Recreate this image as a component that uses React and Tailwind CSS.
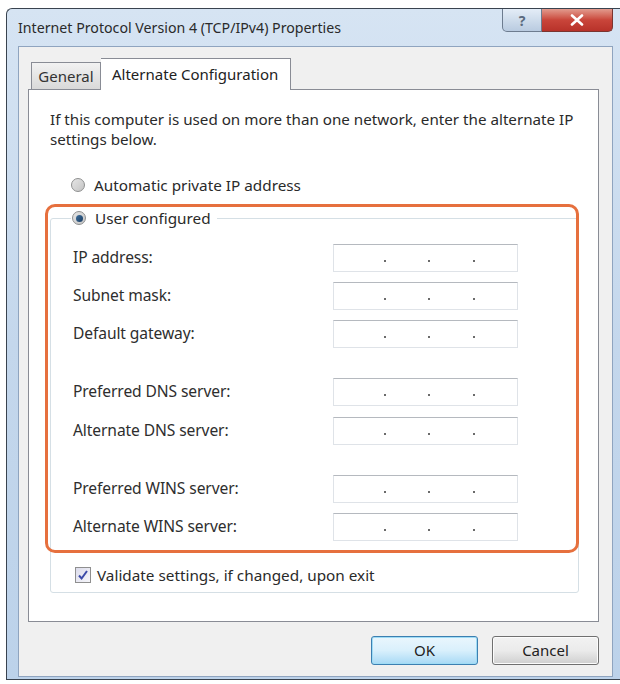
import { useState } from 'react'

const font = { fontFamily: '"Noto Sans", "Open Sans", Arial, sans-serif' }

const Radio = ({ checked }) => (
  <span className="relative flex h-[14px] w-[14px] items-center justify-center rounded-full border border-[#8e8f8f] bg-gradient-to-br from-[#e6e6e6] to-[#c4c4c4]">
    {checked && (
      <span className="h-[7px] w-[7px] rounded-full bg-gradient-to-br from-[#3f6f9c] to-[#1b3d63]" />
    )}
  </span>
)

const Checkbox = ({ checked }) => (
  <span className="flex h-[16px] w-[16px] items-center justify-center border border-[#8f8f8f] bg-gradient-to-br from-[#dcdcec] to-[#f6f6fa]">
    {checked && (
      <svg width="12" height="12" viewBox="0 0 12 12">
        <path d="M2 6.5 L4.6 9.5 L10 2" fill="none" stroke="#3b4aa8" strokeWidth="2" />
      </svg>
    )}
  </span>
)

const IpBox = () => (
  <div className="flex h-[28px] w-[185px] items-center border border-[#dfe3e8] border-t-[#b5b9bf] bg-white pl-[50px]">
    <span className="mt-[5px] h-[2px] w-[2px] bg-[#6b6b6b]" />
    <span className="ml-[42px] mt-[5px] h-[2px] w-[2px] bg-[#6b6b6b]" />
    <span className="ml-[43px] mt-[5px] h-[2px] w-[2px] bg-[#6b6b6b]" />
  </div>
)

const Field = ({ label, className = '' }) => (
  <div className={`flex items-center ${className}`}>
    <span className="w-[260px] text-[15.6px] tracking-[-0.1px] text-[#2e2e2e]">{label}</span>
    <IpBox />
  </div>
)

export default function App() {
  const [tab] = useState('alt')

  return (
    <div className="h-[684px] w-[620px] overflow-hidden bg-white pl-[6px] pt-[8px]" style={font}>
      {/* window frame */}
      <div className="flex h-[672px] flex-col rounded-tl-[6px] border-b border-l border-t border-[#39434f] bg-gradient-to-b from-[#d6e4f3] via-[#c4d7ec] to-[#bcd2ea]">
        {/* title bar */}
        <div className="flex h-[37px] shrink-0 items-start justify-between">
          <span className="whitespace-nowrap pl-[11px] pt-[8px] text-[14.2px] leading-[22px] text-[#2a2a2a]">
            Internet Protocol Version 4 (TCP/IPv4) Properties
          </span>
          <div className="mr-[7px] flex">
            <div className="flex h-[23px] w-[40px] items-center justify-center rounded-bl-[5px] border border-t-0 border-[#6d7c8f] bg-gradient-to-b from-[#e4edf7] to-[#b9cbe0] text-[14px] font-bold text-[#5a6a7e]">
              ?
            </div>
            <div className="flex h-[23px] w-[71px] items-center justify-center rounded-br-[5px] border border-l-0 border-t-0 border-[#7a3530] bg-gradient-to-b from-[#e19a8e] via-[#c9453a] to-[#b8322a]">
              <svg width="16" height="12" viewBox="0 0 16 12">
                <path d="M3 1.5 L13 10.5 M13 1.5 L3 10.5" stroke="#ffffff" strokeWidth="2.6" strokeLinecap="round" />
              </svg>
            </div>
          </div>
        </div>

        {/* client area */}
        <div className="mb-[2px] ml-[11px] mr-[7px] flex flex-1 flex-col border border-[#8fa4bf] bg-[#f0f0f0] pl-[9px] pr-[13px] pt-[10px]">
          {/* tabs */}
          <div className="flex h-[32px] items-end whitespace-nowrap text-[15px]">
            <div className="ml-[3px] flex h-[27px] w-[70px] items-center justify-center border border-b-0 border-[#898c95] bg-gradient-to-b from-[#f2f2f2] to-[#d9d9d9] text-[#333]">
              General
            </div>
            <div className={`relative top-[1px] flex h-[32px] w-[190px] items-center pl-[11px] border border-b-0 border-l-0 border-[#898c95] bg-white text-[#222] ${tab === 'alt' ? 'z-10' : ''}`}>
              Alternate Configuration
            </div>
          </div>

          {/* panel */}
          <div className="flex h-[533px] flex-col border border-[#898c95] bg-white px-[21px] pt-[19px] text-[15.3px] text-[#2a2a2a]">
            <p className="-mr-[8px] text-[15.2px] leading-[20px]">
              If this computer is used on more than one network, enter the alternate IP settings below.
            </p>

            <div className="mt-[26px] flex h-[20px] items-center gap-[9px] pl-[21px]">
              <Radio />
              <span>Automatic private IP address</span>
            </div>

            {/* group box */}
            <div className="relative mt-[23px] flex w-[529px] flex-col rounded-[3px] border border-[#d5dfe5] pb-[7px] pl-[22px] pt-[25px]">
              <div className="absolute left-[20px] top-[-11px] flex h-[20px] items-center gap-[9px] bg-white pl-[1px] pr-[6px]">
                <Radio checked />
                <span>User configured</span>
              </div>

              <Field label="IP address:" />
              <Field label="Subnet mask:" className="mt-[10px]" />
              <Field label="Default gateway:" className="mt-[10px]" />
              <Field label="Preferred DNS server:" className="mt-[30px]" />
              <Field label="Alternate DNS server:" className="mt-[11px]" />
              <Field label="Preferred WINS server:" className="mt-[30px]" />
              <Field label="Alternate WINS server:" className="mt-[10px]" />

              <div className="mt-[24px] flex h-[20px] items-center gap-[6px] pl-[2px]">
                <Checkbox checked />
                <span>Validate settings, if changed, upon exit</span>
              </div>

              {/* highlight annotation */}
              <div className="pointer-events-none absolute left-[-6px] top-[-15px] h-[349px] w-[534px] rounded-[10px] border-[3px] border-[#e6703e]" />
            </div>
          </div>

          {/* buttons */}
          <div className="mt-[14px] flex justify-end gap-[14px] text-[15px]">
            <button className="h-[29px] w-[107px] rounded-[3px] border border-[#3c7fb1] bg-gradient-to-b from-[#eaf6fd] via-[#d9f0fc] to-[#a7d9f5] text-[#222] shadow-[inset_0_0_0_1px_#9fdcf5]">
              OK
            </button>
            <button className="h-[29px] w-[107px] rounded-[3px] border border-[#707070] bg-gradient-to-b from-[#f2f2f2] via-[#ebebeb] to-[#cfcfcf] text-[#222] shadow-[inset_0_0_0_1px_#fcfcfc]">
              Cancel
            </button>
          </div>
        </div>
      </div>
    </div>
  )
}
